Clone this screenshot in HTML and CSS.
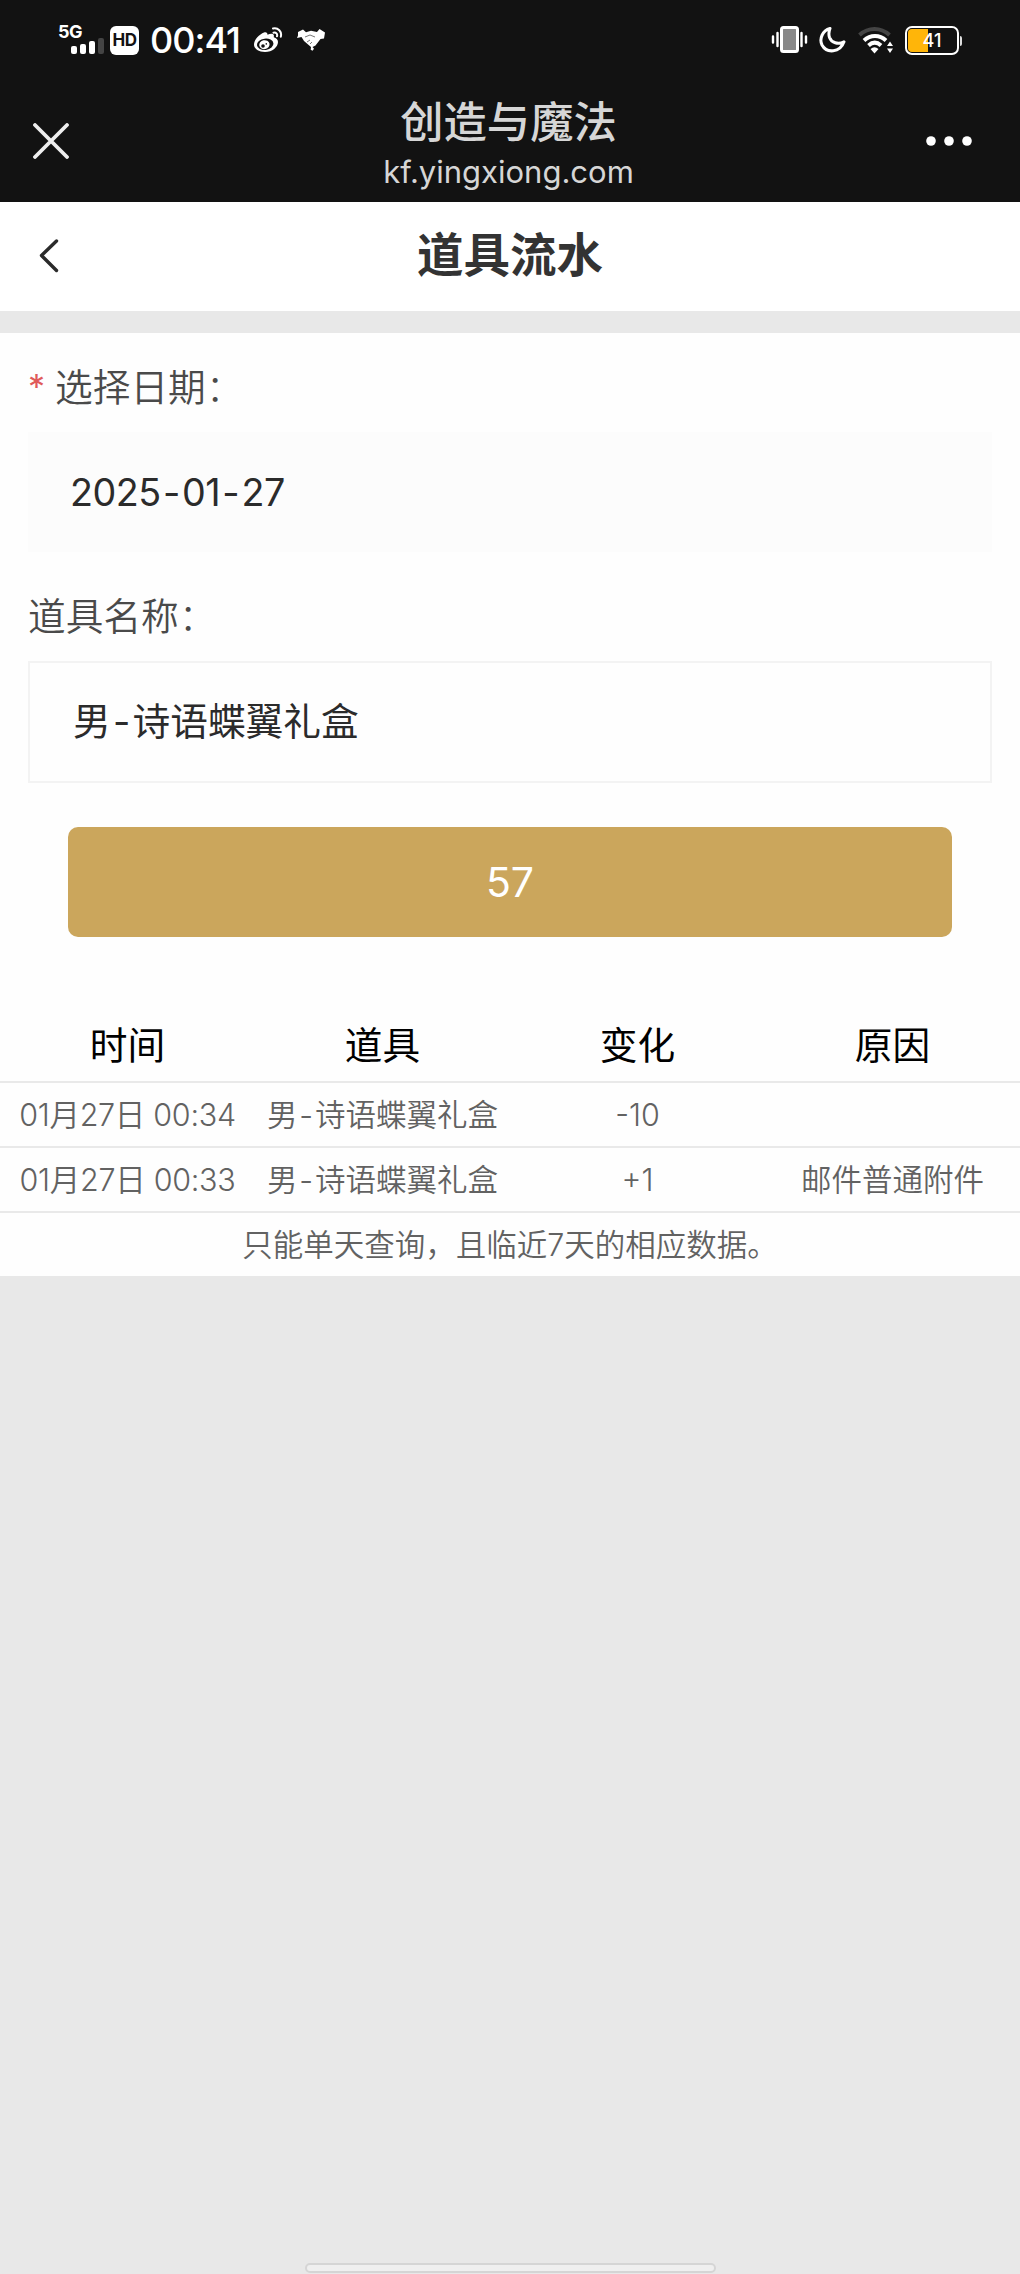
FILE: index.html
```html
<!DOCTYPE html>
<html lang="zh-CN">
<head>
<meta charset="utf-8">
<title>道具流水</title>
<link rel="stylesheet" href="styles.css">
</head>
<body>
<div class="screen">
  <header class="browser">
    <div class="status">
      <div class="status-left">
        <div class="signal">
          <span class="signal-type">5G</span>
          <svg class="bars" width="34" height="17" viewBox="0 0 34 17"><g fill="#fff"><rect x="1" y="9" width="6" height="8" rx="2"/><rect x="10" y="7" width="6" height="10" rx="2"/><rect x="19" y="4" width="6" height="13" rx="2"/></g><rect x="28" y="1" width="6" height="16" rx="2" fill="#444"/></svg>
        </div>
        <span class="hd">HD</span>
        <span class="clock">00:41</span>
        <svg class="weibo" width="30" height="27" viewBox="0 0 30 27"><path fill="#fff" d="M10 5.500c2-.8 3.600 0 3.500 2.300 3.500-1.700 7.300-1.500 6.300 2.400 2.500.8 4.200 2.200 4.200 4.700 0 5-5.700 10-13 10C5 24.900 0 22 0 17.500 0 12.500 5.500 7.200 10 5.500z"/><ellipse cx="11.200" cy="17.300" rx="8.300" ry="5.700" fill="#121212" transform="rotate(-7 11.200 17.300)"/><ellipse cx="10.400" cy="17.700" rx="5.200" ry="4.500" fill="#fff" transform="rotate(-12 10.400 17.700)"/><circle cx="9" cy="19" r="1.800" fill="#121212"/><circle cx="12.300" cy="16.900" r=".8" fill="#121212"/><path d="M19 1.500c5-1.200 9.200 3 7.800 8.200M19.500 5.700c2.600-.6 4.200 1.200 3.500 3.600" fill="none" stroke="#fff" stroke-width="2" stroke-linecap="round"/></svg>
        <svg class="hands" width="29" height="22" viewBox="0 0 29 22"><path fill="#fff" d="M1 3l5-2.500 3 2.800 5-1.500 6 1.200 2.500-3 5.500 3.500-1 6-3.500.5-5 6.500-3 1.500 1.500 1.700-1.500 2-1.800-1 .3-2.700L7 12 4.500 8 0 9l1-2.500z"/><path d="M8 8l5-2 5 2M10 13l3-2m0 4l2-2" stroke="#777" fill="none"/></svg>
      </div>
      <div class="status-right">
        <svg class="vibrate" width="38" height="28" viewBox="0 0 38 28"><rect x="10.500" y="1.500" width="16" height="24" rx="2" fill="#888" stroke="#fff" stroke-width="3"/><path d="M6.500 7v13M2 10.500v6M30.500 7v13M35 10.500v6" stroke="#fff" stroke-width="2.400" stroke-linecap="round"/></svg>
        <svg class="moon" width="28" height="28" viewBox="0 0 28 28"><path d="M11 2.500C3.500 4.500 0 13 3 19c4.500 8.500 18 8 22-3.200-6 3-12.500 1-14.500-4.300-1-3-.7-6 .5-9z" fill="none" stroke="#fff" stroke-width="3" stroke-linejoin="round"/></svg>
        <svg class="wifi" width="36" height="27" viewBox="0 0 36 27"><g fill="none" stroke-width="4"><path d="M1.500 8c9-8 21-8 30 0" stroke="#444"/><path d="M6 13.500c6.500-6 15.500-6 22 0M10.500 18.500c4-3.600 8.500-3.600 12.500 0" stroke="#fff"/></g><path d="M12.500 22q4-3.500 8 0l-4 4.500zM29 19l3-4.500 3 4.500zM29 21.500l3 4.500 3-4.500z" fill="#fff"/></svg>
        <div class="battery"><span class="battery-text">41</span></div>
      </div>
    </div>
    <div class="web-bar">
      <svg class="close" width="36" height="36" viewBox="0 0 36 36"><path d="M2 2l32 32M34 2L2 34" stroke="#eee" stroke-width="3.800" stroke-linecap="round"/></svg>
      <div class="web-title">
        <div class="site-name">创造与魔法</div>
        <div class="site-url">kf.yingxiong.com</div>
      </div>
      <svg class="more" width="46" height="10" viewBox="0 0 46 10" fill="#fff"><circle cx="5" cy="5" r="4.800"/><circle cx="23" cy="5" r="4.800"/><circle cx="41" cy="5" r="4.800"/></svg>
    </div>
  </header>
  <nav class="page-bar">
    <svg class="back" width="20" height="34" viewBox="0 0 20 34"><path d="M17.500 2L2.500 16.500l15 15" fill="none" stroke="#2b2b2b" stroke-width="3.400" stroke-linecap="round" stroke-linejoin="round"/></svg>
    <h1 class="page-title">道具流水</h1>
  </nav>
  <main class="content">
    <div class="label label-date"><span class="required">*</span>选择日期<span class="colon">：</span></div>
    <div class="field field-date"><span>2025<span class="dash">-</span>01<span class="dash">-</span>27</span></div>
    <div class="label label-item">道具名称<span class="colon">：</span></div>
    <div class="field field-item"><span>男<span class="dash">-</span>诗语蝶翼礼盒</span></div>
    <button class="submit">57</button>
    <div class="log">
      <div class="row head"><span>时间</span><span>道具</span><span>变化</span><span>原因</span></div>
      <div class="row"><span class="time">01月27日 00:34</span><span>男<span class="dash">-</span>诗语蝶翼礼盒</span><span>-10</span><span></span></div>
      <div class="row"><span class="time">01月27日 00:33</span><span>男<span class="dash">-</span>诗语蝶翼礼盒</span><span>+1</span><span>邮件普通附件</span></div>
      <div class="note">只能单天查询，且临近7天的相应数据。</div>
    </div>
  </main>
  <div class="home-bar"></div>
</div>
</body>
</html>
```
FILE: styles.css
```css
* { box-sizing: border-box; }
body {
  margin: 0;
  background: #e8e8e8;
  font-family: Inter, "Noto Sans CJK SC", sans-serif;
  color: #2b2b2b;
}
.screen {
  display: flex;
  flex-direction: column;
  width: 1020px;
  height: 2274px;
}
svg { display: block; flex: none; }

.browser { height: 202px; background: #121212; color: #d6d6d6; }
.status {
  display: flex;
  justify-content: space-between;
  height: 80px;
  padding: 0 58px 0 58px;
  color: #fff;
}
.status-left { display: flex; align-items: center; }
.signal { width: 46px; height: 34px; margin-top: -1px; }
.signal-type { display: block; font-size: 18px; line-height: 17px; font-weight: 700; letter-spacing: -0.5px; }
.bars { margin: -3px 0 0 12px; }
.hd {
  width: 29px;
  height: 29px;
  margin-left: 6px;
  border-radius: 6px;
  background: #fff;
  color: #121212;
  font-size: 17px;
  font-weight: 700;
  line-height: 29px;
  letter-spacing: -0.5px;
  text-align: center;
}
.clock { width: 92px; margin-left: 11px; font-size: 36px; font-weight: 500; line-height: 44px; letter-spacing: -1px; white-space: nowrap; }
.weibo { margin: 0 0 0 12px; }
.hands { margin: -1px 0 0 13px; }
.status-right { display: flex; align-items: center; gap: 12px; }
.vibrate { margin-right: -2px; }
.moon { margin-right: -1px; }
.battery {
  width: 54px;
  height: 29px;
  margin: 0 3px 0 -1px;
  border: 2px solid #fff;
  border-radius: 7px;
  padding: 1px;
  position: relative;
  background: linear-gradient(90deg, #ffb509 0 20px, #121212 20px) content-box;
}
.battery::after {
  content: "";
  position: absolute;
  right: -5px;
  top: 8px;
  width: 2px;
  height: 10px;
  border-radius: 0 2px 2px 0;
  background: #ddd;
}
.battery-text { display: block; font-size: 18px; font-weight: 500; line-height: 23px; text-align: center; }

.web-bar {
  display: flex;
  justify-content: space-between;
  align-items: flex-start;
  padding: 0 48px 0 33px;
}
.close { margin-top: 43px; }
.web-title { margin-left: 22px; text-align: center; }
.site-name { margin-top: 17px; font-size: 43.300px; font-weight: 500; line-height: 50px; }
.site-url { margin-top: 6px; font-size: 31px; line-height: 38px; }
.more { margin-top: 56px; }

.page-bar {
  display: flex;
  align-items: center;
  height: 109px;
  padding: 0 38px 0 39px;
  background: #fff;
}
.back { margin-top: -1px; }
.page-title {
  flex: 1;
  margin: -3px 21px 0 0;
  color: #333;
  font-size: 46.500px;
  font-weight: 700;
  line-height: 60px;
  text-align: center;
}

.content {
  display: flex;
  flex-direction: column;
  height: 943px;
  margin-top: 22px;
  background: #fefefe;
}
.label {
  height: 50px;
  margin-left: 28px;
  color: #4a4a4a;
  font-size: 37.700px;
  font-weight: 350;
  line-height: 48px;
}
.label-date { margin-top: 30px; }
.required { display: inline-block; width: 27px; color: #e05a5a; font-size: 34px; font-weight: 400; vertical-align: top; line-height: 48px; }
.colon { font-weight: 300; }
.field {
  display: flex;
  align-items: center;
  margin: 0 28px;
  font-size: 37.700px;
  font-weight: 400;
  line-height: 50px;
}
.dash { padding: 0 0.06em; }
.field-date { height: 120px; margin-top: 19px; padding-left: 42px; background: #fcfcfc; letter-spacing: -0.5px; }
.label-item { margin-top: 40px; }
.field-item { height: 122px; margin-top: 19px; padding: 0 0 3px 43px; border: 2px solid #f3f3f3; background: #fefefe; }
.submit {
  height: 110px;
  margin: 44px 68px 0;
  padding: 0;
  border: 0;
  border-radius: 10px;
  background: #cba65c;
  color: #fff;
  font: 400 41px Inter, sans-serif;
}
.log { margin-top: 73px; }
.row {
  display: grid;
  grid-template-columns: repeat(4, 255px);
  height: 65px;
  border-bottom: 2px solid #e9e9e9;
  color: #626262;
  font-size: 30.500px;
  font-weight: 350;
  line-height: 63px;
  text-align: center;
  white-space: nowrap;
}
.time { letter-spacing: -0.3px; }
.head { height: 73px; color: #000; font-size: 37.700px; font-weight: 400; line-height: 71px; }
.note { color: #626262; font-size: 30.500px; font-weight: 350; line-height: 63px; text-align: center; }

.home-bar {
  width: 411px;
  height: 10px;
  margin: auto auto 1px;
  border: 2px solid #d5d5d5;
  border-radius: 5px;
  background: #efefef;
}
```
